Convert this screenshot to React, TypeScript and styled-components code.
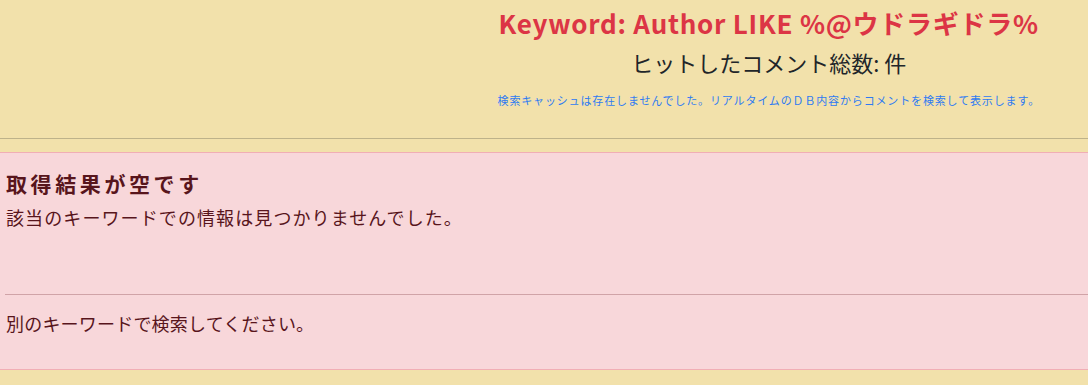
import styled, { createGlobalStyle } from 'styled-components'

const GlobalStyle = createGlobalStyle`
  html, body {
    margin: 0;
    padding: 0;
    background: #f2e1ab;
    font-family: 'Noto Sans CJK JP', 'Noto Sans', sans-serif;
    color: #212529;
  }
  body {
    overflow: hidden;
  }
`

const Page = styled.div`
  width: 1088px;
  height: 385px;
  overflow: hidden;
`

const Header = styled.header`
  display: flex;
  justify-content: flex-end;
  padding: 4px 48px 0 0;
  height: 138px;
  box-sizing: border-box;
`

const HeaderBlock = styled.div`
  display: flex;
  flex-direction: column;
  align-items: center;
`

const Keyword = styled.h1`
  margin: 0;
  font-size: 26px;
  font-weight: 700;
  color: #dc3545;
  letter-spacing: 0.75px;
  line-height: 38px;
`

const HitCount = styled.h2`
  margin: 4px 0 0;
  font-size: 22px;
  font-weight: 400;
  color: #212529;
  letter-spacing: 0;
  line-height: 32px;
`

const CacheNote = styled.p`
  margin: 14px 0 0;
  font-size: 11px;
  color: #2f7bf2;
  letter-spacing: 0.85px;
  line-height: 16px;
`

const Rule = styled.hr`
  margin: 0;
  border: 0;
  border-top: 1px solid #beb28a;
`

const Alert = styled.section`
  box-sizing: border-box;
  margin-top: 13px;
  background: #f8d7da;
  border-top: 1px solid #f1aeb5;
  border-bottom: 1px solid #f1aeb5;
  color: #58151c;
  padding: 14px 0 0 6px;
  height: 218px;
`

const AlertTitle = styled.h4`
  margin: 0;
  font-size: 21px;
  font-weight: 700;
  letter-spacing: 3.6px;
  line-height: 32px;
`

const AlertText = styled.p<{ $gap?: number; $spacing?: number }>`
  margin: ${p => p.$gap ?? 0}px 0 0;
  font-size: 18px;
  letter-spacing: ${p => p.$spacing ?? 0.8}px;
  line-height: 28px;
`

const AlertRule = styled.hr`
  margin: 63px 0 0 -1px;
  border: 0;
  border-top: 1px solid #d0a3a7;
`

export default function App() {
  return (
    <Page>
      <GlobalStyle />
      <Header>
        <HeaderBlock>
          <Keyword>Keyword: Author LIKE %@ウドラギドラ%</Keyword>
          <HitCount>ヒットしたコメント総数: 件</HitCount>
          <CacheNote>
            検索キャッシュは存在しませんでした。リアルタイムのＤＢ内容からコメントを検索して表示します。
          </CacheNote>
        </HeaderBlock>
      </Header>
      <Rule />
      <Alert>
        <AlertTitle>取得結果が空です</AlertTitle>
        <AlertText $gap={4} $spacing={1.1}>
          該当のキーワードでの情報は見つかりませんでした。
        </AlertText>
        <AlertRule />
        <AlertText $gap={14} $spacing={0.2}>
          別のキーワードで検索してください。
        </AlertText>
      </Alert>
    </Page>
  )
}
